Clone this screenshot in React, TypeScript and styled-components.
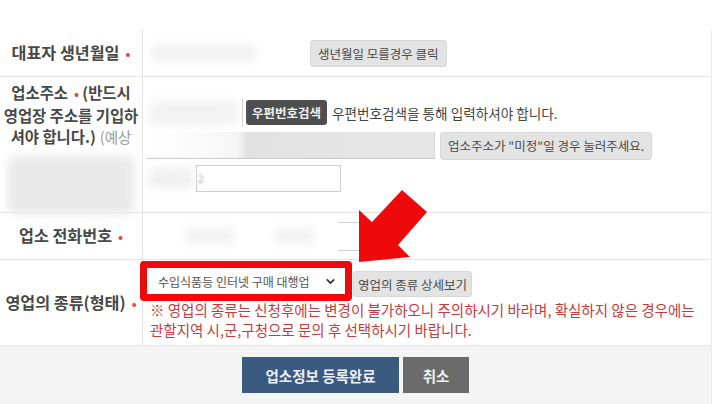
import React from "react";
import styled, { createGlobalStyle } from "styled-components";
import { ChevronDown } from "lucide-react";

const GlobalStyle = createGlobalStyle`
  html, body {
    margin: 0;
    padding: 0;
    background: #ffffff;
  }
  body {
    font-family: "Noto Sans CJK KR", "Noto Sans", sans-serif;
    color: #444;
  }
`;

const Page = styled.div`
  position: relative;
  width: 718px;
  height: 404px;
  overflow: hidden;
  padding-top: 30px;
  box-sizing: border-box;
`;

const Table = styled.div`
  width: 712px;
  border-right: 1px solid #ececec;
  box-sizing: border-box;
`;

const Row = styled.div<{ $height: number }>`
  display: grid;
  grid-template-columns: 143px 1fr;
  height: ${(p) => p.$height}px;
  border-bottom: 1px solid #e4e4e4;
`;

const Label = styled.div`
  display: flex;
  flex-direction: column;
  align-items: center;
  justify-content: center;
  border-right: 1px solid #e4e4e4;
  font-size: 16.2px;
  font-weight: 700;
  line-height: 20px;
  color: #484848;
  white-space: nowrap;
  min-width: 0;
`;

const LabelTop = styled(Label)`
  justify-content: flex-start;
  padding-top: 5px;
  font-size: 15.4px;
  line-height: 21.5px;
`;

const Dot = styled.span`
  color: #e5484d;
  margin-left: 6px;
  font-size: 13px;
  font-weight: 700;
`;

const Hint = styled.span`
  color: #9a9a9a;
  font-weight: 400;
  font-size: 14.5px;
  margin-left: 4px;
`;

const Cell = styled.div`
  display: flex;
  align-items: center;
  min-width: 0;
`;

const StackCell = styled.div`
  display: flex;
  flex-direction: column;
  justify-content: center;
  gap: 5px;
  padding-left: 4px;
`;

const Line = styled.div<{ $h: number }>`
  display: flex;
  align-items: center;
  height: ${(p) => p.$h}px;
`;

const Blur = styled.div<{ $w: number; $h: number; $tone?: string; $ml?: number }>`
  width: ${(p) => p.$w}px;
  height: ${(p) => p.$h}px;
  margin-left: ${(p) => p.$ml ?? 0}px;
  background: ${(p) => p.$tone ?? "#efefef"};
  filter: blur(5px);
  border-radius: 6px;
  flex-shrink: 0;
`;

const GrayButton = styled.div<{ $ml?: number; $h?: number }>`
  display: inline-flex;
  align-items: center;
  justify-content: center;
  height: ${(p) => p.$h ?? 27}px;
  margin-left: ${(p) => p.$ml ?? 0}px;
  padding: 0 7px;
  background: #e3e3e3;
  border: 1px solid #d8d8d8;
  border-radius: 3px;
  font-size: 12.5px;
  color: #4a4a4a;
  white-space: nowrap;
  box-sizing: border-box;
  flex-shrink: 0;
`;

const DarkButton = styled.div`
  display: inline-flex;
  align-items: center;
  justify-content: center;
  width: 81px;
  height: 25px;
  margin-left: 3px;
  background: #4e4e4e;
  border-radius: 3px;
  font-size: 12.5px;
  font-weight: 700;
  color: #f0f0f0;
  flex-shrink: 0;
`;

const Edge = styled.div`
  width: 1px;
  height: 28px;
  margin-left: 3px;
  background: #cfcfcf;
`;

const Note = styled.span<{ $ml?: number }>`
  margin-left: ${(p) => p.$ml ?? 0}px;
  font-size: 13.6px;
  color: #444;
  white-space: nowrap;
`;

const AddressField = styled.div`
  width: 288px;
  height: 27px;
  box-sizing: border-box;
  border-bottom: 1px solid #c9c9c9;
  border-right: 1px solid #d9d9d9;
  background: linear-gradient(
    to right,
    #ffffff 0,
    #f6f6f6 90px,
    #e2e2e2 100px,
    #e6e6e6 100%
  );
  flex-shrink: 0;
`;

const TextBox = styled.div`
  width: 145px;
  height: 27px;
  margin-left: 3px;
  box-sizing: border-box;
  border: 1px solid #cdcdcd;
  display: flex;
  align-items: center;
  padding-left: 1px;
  font-size: 11px;
  color: #aaa;
`;

const Smudge = styled.span`
  filter: blur(0.8px);
`;

const PhoneBox = styled.div`
  display: flex;
  align-items: center;
  gap: 40px;
  width: 215px;
  height: 29px;
  margin-left: 4px;
  background:
    linear-gradient(#d2d2d2, #d2d2d2) right top / 24px 1px no-repeat,
    linear-gradient(#d2d2d2, #d2d2d2) right bottom / 24px 1px no-repeat;
`;

const KindCell = styled.div`
  display: flex;
  flex-direction: column;
  margin-left: -3px;
  padding-top: 1px;
`;

const KindLine = styled.div`
  display: flex;
  align-items: flex-end;
`;

const Highlight = styled.div`
  border: 7px solid #ec0a0a;
  border-radius: 4px;
  position: relative;
  z-index: 1;
`;

const SelectBox = styled.div`
  display: flex;
  align-items: center;
  justify-content: space-between;
  width: 198px;
  height: 26px;
  box-sizing: border-box;
  padding: 0 8px 0 11px;
  background: #ffffff;
  font-size: 12px;
  color: #555;
  white-space: nowrap;
`;

const Warning = styled.div`
  padding-left: 10px;
  margin-top: -1px;
  font-size: 14.5px;
  line-height: 20px;
  color: #c53a3c;
  white-space: nowrap;
`;

const Footer = styled.div`
  display: flex;
  justify-content: center;
  gap: 4px;
  width: 712px;
  height: 62px;
  padding: 11px 0 0 0;
  box-sizing: border-box;
  background: #f4f4f4;
  border-right: 1px solid #ececec;
`;

const ActionButton = styled.div<{ $tone: string; $w: number }>`
  display: flex;
  align-items: center;
  justify-content: center;
  width: ${(p) => p.$w}px;
  height: 36px;
  background: ${(p) => p.$tone};
  color: #eef2f6;
  font-size: 14.5px;
  font-weight: 700;
`;

const ArrowLayer = styled.svg`
  position: absolute;
  left: 0;
  top: 0;
  pointer-events: none;
  z-index: 2;
`;

export default function App() {
  return (
    <>
      <GlobalStyle />
      <Page>
        <Table>
          <Row $height={46}>
            <Label>
              <span>
                대표자 생년월일<Dot>•</Dot>
              </span>
            </Label>
            <Cell>
              <Blur $w={105} $h={16} $ml={8} $tone="#f1f1f1" />
              <GrayButton $ml={54}>생년월일 모를경우 클릭</GrayButton>
            </Cell>
          </Row>

          <Row $height={135}>
            <LabelTop>
              <span>
                업소주소<Dot>•</Dot> (반드시
              </span>
              <span>영업장 주소를 기입하</span>
              <span>
                셔야 합니다.)<Hint>(예상</Hint>
              </span>
              <Blur $w={126} $h={58} $tone="#e9e9e9" style={{ marginTop: 8 }} />
            </LabelTop>
            <StackCell>
              <Line $h={28}>
                <Blur $w={90} $h={24} $ml={2} $tone="#f2f2f2" />
                <Edge />
                <DarkButton>우편번호검색</DarkButton>
                <Note $ml={5}>우편번호검색을 통해 입력하셔야 합니다.</Note>
              </Line>
              <Line $h={28}>
                <AddressField />
                <GrayButton $ml={5} $h={28}>
                  업소주소가 "미정"일 경우 눌러주세요.
                </GrayButton>
              </Line>
              <Line $h={27}>
                <Blur $w={44} $h={20} $ml={2} $tone="#f0f0f0" />
                <TextBox>
                  <Smudge>2</Smudge>
                </TextBox>
              </Line>
            </StackCell>
          </Row>

          <Row $height={46}>
            <Label>
              <span>
                업소 전화번호<Dot>•</Dot>
              </span>
            </Label>
            <Cell>
              <PhoneBox>
                <Blur $w={50} $h={16} $ml={38} $tone="#f2f2f2" />
                <Blur $w={40} $h={16} $tone="#f2f2f2" />
              </PhoneBox>
            </Cell>
          </Row>

          <Row $height={85}>
            <Label>
              <span>
                영업의 종류(형태)<Dot>•</Dot>
              </span>
            </Label>
            <KindCell>
              <KindLine>
                <Highlight>
                  <SelectBox>
                    수입식품등 인터넷 구매 대행업
                    <ChevronDown size={13} strokeWidth={3.2} color="#333" />
                  </SelectBox>
                </Highlight>
                <GrayButton $ml={1} $h={26} style={{ marginBottom: 4, padding: "0 4px" }}>
                  영업의 종류 상세보기
                </GrayButton>
              </KindLine>
              <Warning>
                ※ 영업의 종류는 신청후에는 변경이 불가하오니 주의하시기 바라며, 확실하지 않은 경우에는
                <br />
                관할지역 시,군,구청으로 문의 후 선택하시기 바랍니다.
              </Warning>
            </KindCell>
          </Row>
        </Table>

        <Footer>
          <ActionButton $tone="#3a5a80" $w={157}>
            업소정보 등록완료
          </ActionButton>
          <ActionButton $tone="#6b6b6b" $w={66}>
            취소
          </ActionButton>
        </Footer>

        <ArrowLayer width={718} height={404} viewBox="0 0 718 404">
          <polygon
            points="359,262 359,210 372,222 402,190 427,212 398,245 410,257"
            fill="#ee0a0a"
          />
        </ArrowLayer>
      </Page>
    </>
  );
}
